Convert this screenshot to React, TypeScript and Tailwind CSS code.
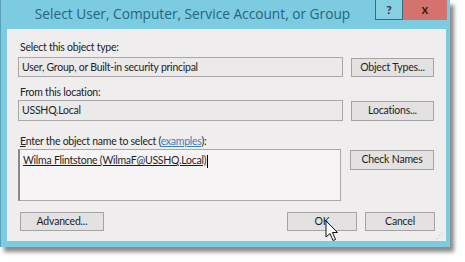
import React from 'react';

const font = { fontFamily: 'Lato, "Liberation Sans", Arial, sans-serif' };

const Field: React.FC<{ className?: string; children?: React.ReactNode }> = ({ className = '', children }) => (
  <div className={`border border-[#a9a7a8] pl-[3px] text-[10.5px] tracking-[-0.25px] leading-[18px] text-[#1e1e1e] ${className}`}>{children}</div>
);

const Button: React.FC<{ className?: string; children: React.ReactNode }> = ({ className = '', children }) => (
  <div className={`flex items-center justify-center border border-[#a4a4a4] bg-[#e3e1e2] text-[10.5px] tracking-[-0.2px] text-[#1e1e1e] ${className}`}>
    {children}
  </div>
);

const Label: React.FC<{ className?: string; children: React.ReactNode }> = ({ className = '', children }) => (
  <div className={`h-[14px] text-[10.5px] tracking-[-0.25px] leading-[14px] text-[#222] pl-[2px] ${className}`}>{children}</div>
);

const Cursor: React.FC = () => (
  <svg className="absolute left-[325px] top-[220px]" width="14" height="22" viewBox="0 0 14 22">
    <path d="M1 1 L1 17 L5 13.5 L8 20.5 L10.5 19.5 L7.5 12.5 L12.5 12.5 Z" fill="#fff" stroke="#111" strokeWidth="1" strokeLinejoin="round" />
  </svg>
);

export default function App() {
  return (
    <div className="relative w-[465px] h-[262px] bg-white overflow-hidden" style={font}>
      <div className="w-[450px] h-[247px] bg-[#7ccbe0] border-l border-[#5a9fb5] shadow-[4px_5px_4px_rgba(40,40,40,0.55)] flex flex-col">
        {/* title bar */}
        <div className="relative h-[29px] flex items-center justify-center pr-[66px]">
          <span className="text-[13.7px] text-[#25657f]" style={{ fontFamily: '"Open Sans", "Noto Sans", sans-serif' }}>
            Select User, Computer, Service Account, or Group
          </span>
          <div className="absolute right-[3px] top-0 flex h-[20px]">
            <div className="w-[28px] flex items-center justify-center border border-[#3a6a80] border-t-0 bg-[#87cfe2] text-[12px] font-bold text-[#1f3550]">?</div>
            <div className="w-[44px] flex items-center justify-center bg-[#d4736d] text-[13px] font-bold text-[#4a1a18]">x</div>
          </div>
        </div>

        {/* client area */}
        <div className="relative flex-1 ml-[6px] mr-[4px] mb-[6px] bg-[#efedee] pt-[11px] pl-[11px] pr-[11px]">
          <Label>Select this object type:</Label>
          <div className="mt-[3px] grid grid-cols-[325px_83px] gap-x-[8px]">
            <Field className="h-[20px] bg-[#ebe9ea]">User, Group, or Built-in security principal</Field>
            <Button className="h-[19px] mt-[1px]">Object Types...</Button>
          </div>

          <Label className="mt-[8px]">From this location:</Label>
          <div className="mt-[1px] grid grid-cols-[325px_83px] gap-x-[8px]">
            <Field className="h-[21px] bg-[#ebe9ea] leading-[19px]">USSHQ.Local</Field>
            <Button className="h-[20px] mt-[1px]">Locations...</Button>
          </div>

          <Label className="mt-[13px]">
            <span className="underline">E</span>nter the object name to select (
            <span className="text-[#3b7fc4] underline">examples</span>):
          </Label>
          <div className="mt-[1px] grid grid-cols-[323px_84px] gap-x-[9px]">
            <Field className="h-[52px] bg-[#f6f4f5] border-l-2 border-l-[#8a8889] pt-[1px]">
              <span className="underline">Wilma Flintstone (WilmaF@USSHQ.Local)</span>
              <span className="inline-block w-px h-[13px] bg-black align-middle ml-px" />
            </Field>
            <Button className="h-[20px] mt-[1px]">Check Names</Button>
          </div>

          <div className="mt-[11px] flex items-center pl-[2px]">
            <Button className="w-[84px] h-[19px]">Advanced...</Button>
            <div className="flex-1" />
            <Button className="w-[70px] h-[19px] mr-[8px] border-[#9fb2c4]">OK</Button>
            <Button className="w-[70px] h-[19px]">Cancel</Button>
          </div>
          <div className="absolute right-[3px] bottom-[2px] text-[7px] leading-none text-[#b5b3b4]">⋰</div>
        </div>
      </div>
      <Cursor />
    </div>
  );
}
